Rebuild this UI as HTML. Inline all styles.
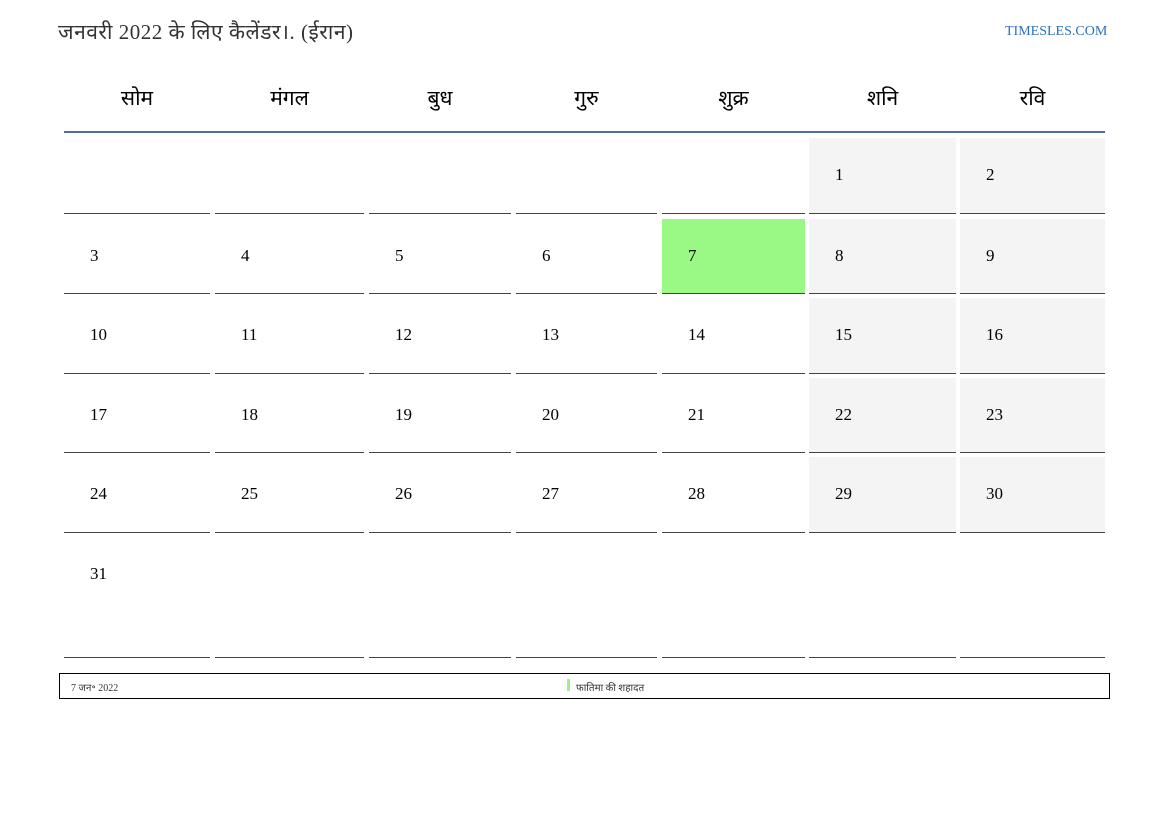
<!DOCTYPE html>
<html><head><meta charset="utf-8"><style>
body{margin:0;width:1169px;height:827px;background:#fff;position:relative;font-family:"Liberation Serif","Noto Serif CJK SC",serif;overflow:hidden}
.a{position:absolute}
.c{position:absolute;border-bottom:1.5px solid #444;box-sizing:border-box}
.n{position:absolute;font-size:17px;color:#000}
.h{position:absolute;top:84px;font-size:21px;text-align:center;font-family:"Liberation Serif","Noto Serif CJK SC",serif;color:#000}
</style></head><body>
<div class="a" style="left:58px;top:18px;font-size:21px;color:#333;letter-spacing:0.5px;font-family:'Liberation Serif','Noto Serif CJK SC',serif">जनवरी 2022 के लिए कैलेंडर।. (ईरान)</div>
<div class="a" style="left:1005px;top:24px;font-size:14px;color:#2a6fc0">TIMESLES.COM</div>
<div class="a" style="left:64px;top:131px;width:1041px;height:2px;background:#4d6fa0"></div>
<div id="g"></div>
<div class="a" style="left:59px;top:673px;width:1051px;height:26px;border:1px solid #000;box-sizing:border-box"></div>
<div class="a" style="left:71px;top:680px;font-size:10px;color:#333">7 जन॰ 2022</div>
<div class="a" style="left:567px;top:679px;width:3px;height:12px;background:#99f484"></div>
<div class="a" style="left:576px;top:680px;font-size:10px;color:#333">फातिमा की शहादत</div>
<script>
var xs=[[64,210],[215,364],[369,511],[516,657],[662,805],[809,956],[960,1105]];
var ys=[[138,214],[219,294],[298,374],[378,453],[457,533],[537,658]];
var hd=["सोम","मंगल","बुध","गुरु","शुक्र","शनि","रवि"];
var h="";
xs.forEach(function(x,i){h+='<div class="h" style="left:'+x[0]+'px;width:'+(x[1]-x[0])+'px">'+hd[i]+'</div>';});
var d=-5;
for(var r=0;r<6;r++)for(var c=0;c<7;c++){d++;var x=xs[c],y=ys[r];
var bg=(d==7)?'#99f984':((c>=5&&d>=1&&d<=31)?'#f4f4f4':'transparent');
h+='<div class="c" style="left:'+x[0]+'px;top:'+y[0]+'px;width:'+(x[1]-x[0])+'px;height:'+(y[1]-y[0])+'px;background:'+bg+'"></div>';
if(d>=1&&d<=31)h+='<div class="n" style="left:'+(x[0]+26)+'px;top:'+(y[0]+27)+'px">'+d+'</div>';}
document.getElementById('g').innerHTML=h;
</script>
</body></html>
